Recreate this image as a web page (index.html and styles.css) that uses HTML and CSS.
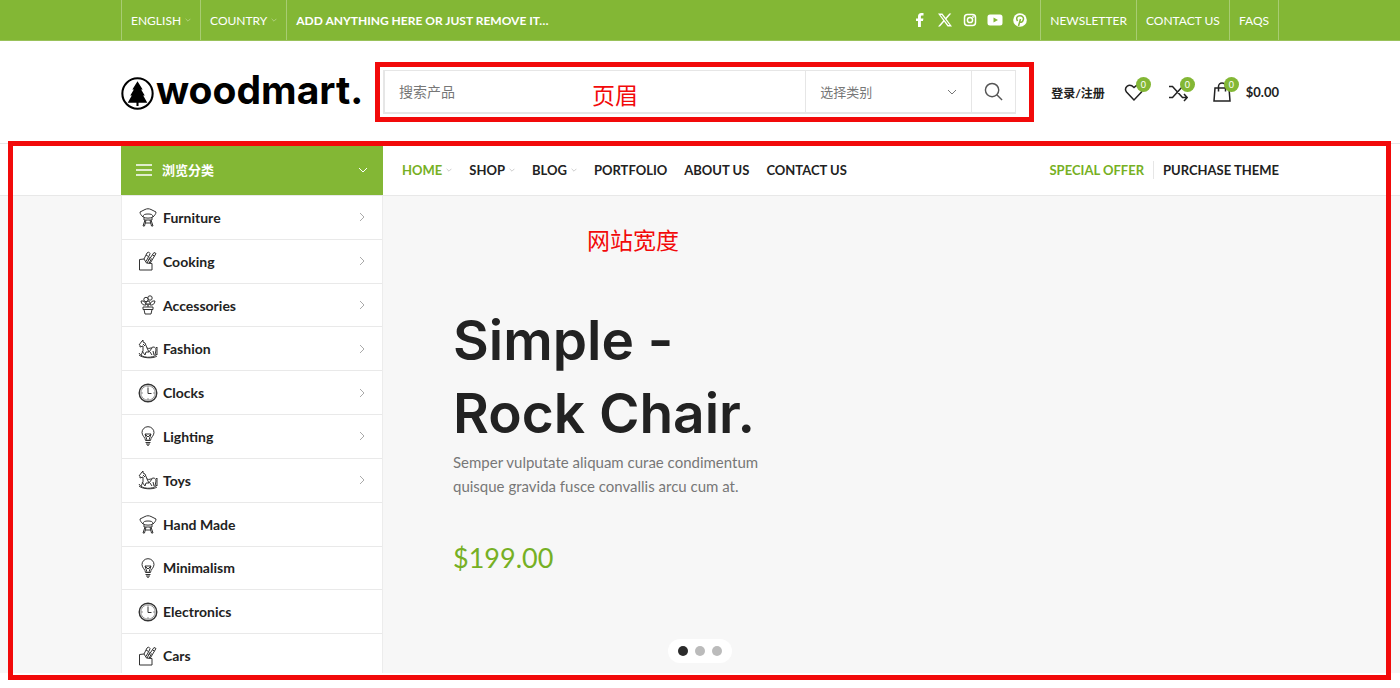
FILE: index.html
```html
<!DOCTYPE html>
<html lang="zh-CN">
<head>
<meta charset="utf-8">
<meta name="viewport" content="width=device-width, initial-scale=1">
<title>woodmart.</title>
<link rel="stylesheet" href="styles.css">
</head>
<body>
<svg class="sprite" aria-hidden="true">
  <symbol id="down" viewBox="0 0 10 6"><path d="M1 1l4 4 4-4"/></symbol>
  <symbol id="right" viewBox="0 0 6 10"><path d="M1 1l4 4-4 4"/></symbol>
  <symbol id="chair" viewBox="0 0 20 20"><path d="M5 10C3.500 8.500 2 7 2 5l5-2.500c2-1 4-1 6 0L18 5c0 2-1.500 3.500-3 5M5 10c0-2.500 2-3 5-3s5 .5 5 3c-2 1.500-8 1.500-10 0zM6 11v2h8v-2M7 13L5 19h1.500L8 13M13 13l2 6h-1.500L12 13M7 16h6"/></symbol>
  <symbol id="cook" viewBox="0 0 20 20"><path d="M1.500 8.500L6 8l2.500 4 5.500.5V19H1.500zM6 8l3-6 1.500-1 1.500 1.500-.5 1.500L8 10.500M9 12.200l3-6M11 12.500l2.500-5M10.500 9.500L16 1.500l2 1-4.500 7.500-1.500 2.500M14.500 4l2 1M8 4l2.500 1.500"/></symbol>
  <symbol id="plant" viewBox="0 0 20 20"><path d="M5 12h10v2.500H5zM6 14.500l1 4.500h6l1-4.500M10 12V8"/><circle cx="8" cy="4.500" r="2.200"/><circle cx="12" cy="3" r="2.200"/><circle cx="10" cy="8" r="2"/><path d="M8 10C5 10.500 3.500 9 3 6c3-.5 4.500 1 5 4zM12 10c3 .5 4.500-1 5-4-3-.5-4.500 1-5 4z"/></symbol>
  <symbol id="horse" viewBox="0 0 20 20"><path d="M1 6l3-4 1-1v2l2 1 2 5c2 1 4 0 6-1 2 0 3 1 3 3l-1 5M18 9l1-1v8M2 6v2l3-1v5l-2 4M4 12l3 4M15 12l1 4M9 9l2 4 3-4M11 13H8l-1 3M12 13l2 3M1 14c2 5 14 6 18 1M1 16c3 3 14 4 18 1M7 7L5 5"/></symbol>
  <symbol id="clock" viewBox="0 0 20 20"><circle cx="10" cy="10" r="8.800" stroke-width="1.400"/><circle cx="10" cy="10" r="7.200" stroke-width=".5"/><path d="M10 5v5.500h3.500M10 3.500v1M10 15.500v1M3.500 10h1M15.500 10h1"/></symbol>
  <symbol id="bulb" viewBox="0 0 20 20"><path d="M7.500 14.500c0-3-3.500-4.500-3.500-8a6 5.800 0 0 1 12 0c0 3.500-3.500 5-3.500 8zM7.500 16.500h5M8 18h4M9 19.200h2M9 14L7 8h6l-2 6M7 8l3 3 3-3"/></symbol>
</svg>

<div class="topbar">
  <div class="container topbar-row">
    <a class="top-link" href="#">ENGLISH<svg class="caret"><use href="#down"/></svg></a>
    <a class="top-link" href="#">COUNTRY<svg class="caret"><use href="#down"/></svg></a>
    <strong class="top-note">ADD ANYTHING HERE OR JUST REMOVE IT…</strong>
    <div class="social">
      <a href="#" aria-label="Facebook"><svg viewBox="0 0 16 16"><path d="M6 15V9H4V6.500h2V4.500C6 2.300 7.200 1 9.300 1H11.500v2.500h-1.300c-1 0-1.300.4-1.300 1.200v1.800h2.500L11 9H8.900v6z"/></svg></a>
      <a href="#" aria-label="X"><svg viewBox="0 0 16 16"><path fill-rule="evenodd" d="M1 1.500h4.400l3.200 4.300 3.800-4.300h1.900L9.500 7l5.500 7.500h-4.400L7.100 9.800 3 14.500H1L6.200 8.600zM3.500 2.900l7.800 10.200h1.200L4.800 2.900z"/></svg></a>
      <a href="#" aria-label="Instagram"><svg class="lined" viewBox="0 0 16 16"><rect x="2.500" y="2.500" width="11" height="11" rx="3"/><circle cx="8" cy="8" r="2.600"/><circle cx="11.300" cy="4.700" r=".4"/></svg></a>
      <a href="#" aria-label="YouTube"><svg viewBox="0 0 16 16"><path fill-rule="evenodd" d="M3 2.500h10q2.500 0 2.500 2.500v6q0 2.500-2.500 2.500H3Q.5 13.500.5 11V5Q.5 2.500 3 2.500zm3.500 3v5L11 8z"/></svg></a>
      <a href="#" aria-label="Pinterest"><svg viewBox="0 0 16 16"><circle cx="8" cy="8" r="6.800"/><path class="pin" d="M6.500 14l2-7M5.600 9C3.500 5.500 5.500 3.800 8 3.800s4 1.700 3.300 4C10.500 10.800 8.300 10.500 7.700 9.500"/></svg></a>
    </div>
    <a class="top-link" href="#">NEWSLETTER</a>
    <a class="top-link" href="#">CONTACT US</a>
    <a class="top-link last" href="#">FAQS</a>
  </div>
</div>

<header class="container header">
  <a class="logo" href="#">
    <svg class="logo-mark" viewBox="0 0 32 32"><circle cx="16" cy="16" r="14.700"/><path d="M16 4l5 8h-1.500l3.500 6h-1.500l4 7H17v3h-2v-3H6.500l4-7H9l3.500-6H11z"/></svg>
    <span>woodmart.</span>
  </a>
  <form class="search">
    <input class="search-input" type="text" placeholder="搜索产品" aria-label="搜索产品">
    <span class="category">
      <select aria-label="选择类别"><option>选择类别</option></select>
      <svg class="select-caret"><use href="#down"/></svg>
    </span>
    <button class="search-button" type="button" aria-label="搜索"><svg viewBox="0 0 20 20"><circle cx="8.500" cy="8.500" r="7"/><path d="M13.500 13.500L19 19"/></svg></button>
    <span class="frame search-frame"></span>
    <span class="mark search-mark">页眉</span>
  </form>
  <a class="login" href="#">登录/注册</a>
  <a class="tool" href="#" aria-label="Wishlist"><svg viewBox="0 0 20 20"><path d="M10 18L2.500 10C-.5 5.500 5 .5 10 5.500c5-5 10.500 0 7.500 4.500z"/></svg><span class="badge">0</span></a>
  <a class="tool" href="#" aria-label="Compare"><svg viewBox="0 0 20 20"><path d="M1 4.500h3.500l10 11H19M1 15.500h3.500l10-11H19M16 12l3.200 3.500L16 19M16 1l3.200 3.500L16 8"/></svg><span class="badge">0</span></a>
  <a class="tool" href="#" aria-label="Cart"><svg viewBox="0 0 20 20"><path d="M3 6h14l1 13H2zM6.500 9.500V4.500a3.500 3.500 0 0 1 7 0v5"/></svg><span class="badge">0</span></a>
  <span class="total">$0.00</span>
</header>

<div class="site">
  <div class="navbar">
    <div class="container nav-row">
      <button class="browse" type="button"><svg class="burger" viewBox="0 0 16 12"><path d="M0 1h16M0 6h16M0 11h16"/></svg>浏览分类<svg class="browse-caret"><use href="#down"/></svg></button>
      <nav class="menu">
        <a class="active" href="#">HOME<svg class="caret"><use href="#down"/></svg></a>
        <a href="#">SHOP<svg class="caret"><use href="#down"/></svg></a>
        <a href="#">BLOG<svg class="caret"><use href="#down"/></svg></a>
        <a href="#">PORTFOLIO</a>
        <a href="#">ABOUT US</a>
        <a href="#">CONTACT US</a>
      </nav>
      <nav class="menu promo">
        <a class="active" href="#">SPECIAL OFFER</a>
        <a href="#">PURCHASE THEME</a>
      </nav>
    </div>
  </div>
  <main class="hero">
    <div class="container hero-row">
      <nav class="categories">
        <a href="#"><svg class="icon"><use href="#chair"/></svg>Furniture<svg class="arrow"><use href="#right"/></svg></a>
        <a href="#"><svg class="icon"><use href="#cook"/></svg>Cooking<svg class="arrow"><use href="#right"/></svg></a>
        <a href="#"><svg class="icon"><use href="#plant"/></svg>Accessories<svg class="arrow"><use href="#right"/></svg></a>
        <a href="#"><svg class="icon"><use href="#horse"/></svg>Fashion<svg class="arrow"><use href="#right"/></svg></a>
        <a href="#"><svg class="icon"><use href="#clock"/></svg>Clocks<svg class="arrow"><use href="#right"/></svg></a>
        <a href="#"><svg class="icon"><use href="#bulb"/></svg>Lighting<svg class="arrow"><use href="#right"/></svg></a>
        <a href="#"><svg class="icon"><use href="#horse"/></svg>Toys<svg class="arrow"><use href="#right"/></svg></a>
        <a href="#"><svg class="icon"><use href="#chair"/></svg>Hand Made</a>
        <a href="#"><svg class="icon"><use href="#bulb"/></svg>Minimalism</a>
        <a href="#"><svg class="icon"><use href="#clock"/></svg>Electronics</a>
        <a href="#"><svg class="icon"><use href="#cook"/></svg>Cars</a>
      </nav>
      <section class="slide">
        <h1>Simple -<br>Rock Chair.</h1>
        <p class="lead">Semper vulputate aliquam curae condimentum<br>quisque gravida fusce convallis arcu cum at.</p>
        <p class="price">$199.00</p>
      </section>
    </div>
    <div class="dots">
      <button class="dot current" type="button" aria-label="1"></button>
      <button class="dot" type="button" aria-label="2"></button>
      <button class="dot" type="button" aria-label="3"></button>
    </div>
  </main>
  <span class="frame site-frame"></span>
  <span class="mark site-mark">网站宽度</span>
</div>
</body>
</html>
```
FILE: styles.css
```css
* { box-sizing: border-box; }
body {
  margin: 0;
  padding-bottom: 15px;
  background: #fff;
  color: #222;
  font-family: Lato, "Noto Sans CJK SC", sans-serif;
  font-size: 13px;
}
a { color: inherit; text-decoration: none; }
button, input, select { font: inherit; border: 0; background: none; padding: 0; margin: 0; }
svg { fill: none; stroke: currentColor; flex: none; }
.sprite { position: absolute; width: 0; height: 0; }
.container { max-width: 1158px; margin: 0 auto; }

.topbar { background: #83b735; color: #fff; border-bottom: 1px solid #99c25a; }
.topbar-row { display: flex; height: 40px; }
.top-link {
  display: flex;
  align-items: center;
  padding: 0 9px;
  border-left: 1px solid #a8cc72;
  font-size: 12px;
}
.top-link.last { border-right: 1px solid #a8cc72; }
.top-note { display: flex; align-items: center; padding-left: 9px; border-left: 1px solid #a8cc72; font-size: 12px; font-weight: 700; }
.caret { width: 6px; height: 4px; margin-left: 4px; opacity: .6; }
.social { display: flex; align-items: center; gap: 9px; margin-left: auto; padding-right: 12px; }
.social svg { display: block; width: 16px; height: 16px; fill: currentColor; stroke: none; }
.social .lined { fill: none; stroke: currentColor; stroke-width: 1.5; }
.social .pin { fill: none; stroke: #83b735; stroke-width: 1.5; }

.header { display: flex; align-items: center; height: 102px; }
.logo { display: flex; align-items: center; gap: 2px; width: 262px; padding-bottom: 4px; color: #000; }
.logo-mark { width: 33px; height: 33px; margin-top: 6px; stroke-width: 2; }
.logo-mark path { fill: currentColor; stroke: none; }
.logo span { font: 700 39px/48px Inter, sans-serif; }
.search { position: relative; display: flex; flex: 1; height: 44px; border: 2px solid #e6e6e6; border-width: 1px 1px 2px 2px; color: #777; }
.search-input { flex: 1; min-width: 0; padding-left: 14px; font-size: 14px; }
.search-input::placeholder { color: #777; opacity: 1; }
.category { display: flex; align-items: center; width: 167px; border: solid #e6e6e6; border-width: 0 1px; padding-right: 14px; }
.category select { flex: 1; height: 40px; padding-left: 14px; appearance: none; color: #777; }
.select-caret { width: 10px; height: 6px; }
.search-button { width: 43px; display: grid; place-items: center; color: #555; }
.search-button svg { width: 19px; height: 19px; stroke-width: 1.5; }
.frame { position: absolute; border: 5px solid #f20a0a; pointer-events: none; }
.mark { position: absolute; color: #f20a0a; font-size: 23px; line-height: 28px; white-space: nowrap; }
.search-frame { inset: -9px -19px -10px -10px; }
.search-mark { left: 207px; top: 10px; }
.login { margin-left: 35px; font-size: 12px; font-weight: 700; }
.tool { position: relative; margin-left: 19px; width: 25px; }
.tool svg { display: block; width: 20px; height: 20px; stroke-width: 1.5; }
.badge {
  position: absolute;
  top: -5px;
  right: -2px;
  width: 15px;
  height: 15px;
  border-radius: 50%;
  background: #83b735;
  color: #fff;
  font-size: 9px;
  line-height: 15px;
  text-align: center;
}
.total { margin-left: 9px; font-weight: 700; }

.site { position: relative; }
.navbar { border: solid #e8e8e8; border-width: 1px 0; }
.nav-row { display: flex; height: 51px; }
.browse {
  display: flex;
  align-items: center;
  width: 262px;
  padding: 0 15px;
  background: #83b735;
  color: #fff;
  font-weight: 600;
}
.burger { width: 16px; height: 12px; margin-right: 10px; stroke-width: 1.5; }
.browse-caret { width: 10px; height: 6px; margin-left: auto; }
.menu { display: flex; align-items: center; gap: 17px; margin-left: 19px; font-weight: 700; }
.menu a { display: flex; align-items: center; }
.menu .active { color: #76b024; }
.menu .caret { color: #777; }
.promo { margin-left: auto; gap: 9px; }
.promo a + a { border-left: 1px solid #e6e6e6; padding-left: 9px; line-height: 18px; }

.hero { position: relative; background: #f7f7f7; overflow: hidden; }
.hero-row { display: flex; min-height: 477px; }
.categories {
  display: grid;
  grid-auto-rows: 1fr;
  width: 262px;
  margin-bottom: -5px;
  background: #fff;
  border: solid #ececec;
  border-width: 0 1px;
  font-size: 14px;
  font-weight: 700;
}
.categories a { display: flex; align-items: center; padding: 0 17px 0 16px; border-bottom: 1px solid #e9e9e9; }
.icon { width: 20px; height: 20px; margin-right: 5px; color: #333; }
.arrow { width: 6px; height: 10px; margin-left: auto; color: #aaa; }
.slide { padding: 108px 0 0 70px; }
.slide h1 { margin: 0; font: 600 55px/73px Inter, sans-serif; }
.lead { margin: 0; color: #777; font-size: 15px; line-height: 24px; }
.price { margin: 42px 0 0; color: #76b024; font-size: 27px; line-height: 36px; }
.dots { position: absolute; left: 50%; bottom: 10px; transform: translateX(-50%); display: flex; gap: 7px; padding: 7px 10px; border-radius: 12px; background: #fff; }
.dot { width: 10px; height: 10px; border-radius: 50%; background: #bbb; }
.dot.current { background: #2b2b2b; }
.site-frame { inset: -2px 9px -7px 8px; z-index: 2; }
.site-mark { left: 587px; top: 83px; }
```
